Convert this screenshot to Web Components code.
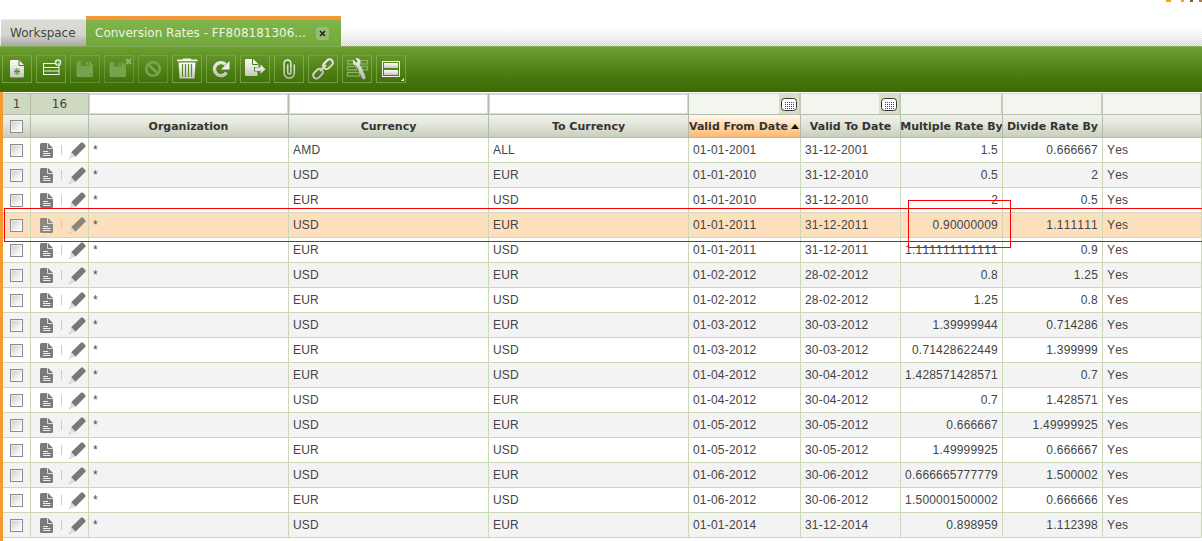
<!DOCTYPE html>
<html>
<head>
<meta charset="utf-8">
<title>Conversion Rates</title>
<style>
  html, body { margin: 0; padding: 0; background: #fff; overflow: hidden; }
  body { width: 1202px; height: 541px; position: relative; font-family: "DejaVu Sans", sans-serif; }
  svg { display: block; }
  .defs { position: absolute; width: 0; height: 0; }
</style>
</head>
<body>
<svg class="defs" aria-hidden="true"><defs>
  <linearGradient id="w" x1="0" y1="0" x2="0" y2="1"><stop offset="0" stop-color="#fff"/><stop offset="1" stop-color="#c4c8bc"/></linearGradient>
  <linearGradient id="wl" gradientUnits="userSpaceOnUse" x1="0" y1="3" x2="0" y2="23"><stop offset="0" stop-color="#f4f4f0"/><stop offset="1" stop-color="#b4baa8"/></linearGradient>
</defs></svg>
<app-shell>
  <tab-bar slot="tabs">
    <plain-tab>Workspace</plain-tab>
    <active-tab>Conversion Rates - FF808181306...</active-tab>
  </tab-bar>
  <tool-bar slot="toolbar">
    <tool-button title="New document">
      <svg width="28" height="26" viewBox="0 0 28 26"><path d="M8.500 4h7.500l5 5v11a1.500 1.500 0 0 1-1.500 1.500h-11a1.500 1.500 0 0 1-1.500-1.500v-15a1.500 1.500 0 0 1 1.500-1z" fill="url(#w)"/><path d="M16 3.500v6h5.500" fill="none" stroke="#4a7a18" stroke-width="1"/><path d="M14 12v7M11 15.500h6M11.500 13l5 5M16.500 13l-5 5" stroke="#4f9020" stroke-width="1"/></svg>
    </tool-button>
    <tool-button title="New row">
      <svg width="28" height="26" viewBox="0 0 28 26"><rect x="6.500" y="7.500" width="15.500" height="11" fill="none" stroke="#f2f5ea" stroke-width="1"/><path d="M6.500 11.500h15.500M6.500 15h15.500" stroke="#f2f5ea"/><circle cx="21" cy="6.500" r="3.200" fill="#f4f4f0"/><path d="M21 4v5M18.700 6.500h4.600M19.300 4.800l3.400 3.400M22.700 4.800l-3.400 3.400" stroke="#5d8d2b" stroke-width=".8"/></svg>
    </tool-button>
    <tool-button title="Save" disabled>
      <svg width="28" height="26" viewBox="0 0 28 26"><path d="M7 5h11.500l3.500 3.500v11a1.500 1.500 0 0 1-1.500 1.500h-13.500a1.500 1.500 0 0 1-1.500-1.500v-13a1.500 1.500 0 0 1 1.500-1.500z" fill="#76a34d"/><rect x="10" y="5" width="8" height="5" fill="#5a8c2d"/><rect x="15" y="6" width="2" height="3" fill="#76a34d"/><circle cx="19.500" cy="18.500" r=".7" fill="#4d8021"/></svg>
    </tool-button>
    <tool-button title="Save and close" disabled>
      <svg width="28" height="26" viewBox="0 0 28 26"><path d="M6 6h11.500l3.500 3.500v10a1.500 1.500 0 0 1-1.500 1.500h-13.500a1.500 1.500 0 0 1-1.500-1.500v-12a1.500 1.500 0 0 1 1.500-1.500z" fill="#76a34d"/><rect x="9" y="6" width="8" height="4.500" fill="#5a8c2d"/><rect x="14" y="7" width="2" height="2.500" fill="#76a34d"/><path d="M21 3l5 5M26 3l-5 5" stroke="#8fb56b" stroke-width="2"/></svg>
    </tool-button>
    <tool-button title="Cancel" disabled>
      <svg width="28" height="26" viewBox="0 0 28 26"><circle cx="14" cy="13" r="6.800" fill="none" stroke="#78a550" stroke-width="2.600"/><path d="M9.500 8.500l9 9" stroke="#78a550" stroke-width="2.600"/></svg>
    </tool-button>
    <tool-button title="Delete">
      <svg width="28" height="26" viewBox="0 0 28 26"><path d="M9.500 3.500l.6-1h7.800l.6 1h6v1.700h-20.500v-1.700z" fill="#f4f4f2"/><path d="M5.500 6.500h17l-1 16h-15z" fill="url(#w)"/><path d="M9.500 8v13M12.500 8v13M15.500 8v13M18.500 8v13" stroke="#5a8a2a" stroke-width="1.200"/></svg>
    </tool-button>
    <tool-button title="Refresh">
      <svg width="28" height="26" viewBox="0 0 28 26"><path d="M19.500 16.500a6.500 6.500 0 1 1-1-8" fill="none" stroke="url(#wl)" stroke-width="3.400"/><path d="M22.500 5v8.500h-8.500z" fill="#efefed"/></svg>
    </tool-button>
    <tool-button title="Export">
      <svg width="28" height="26" viewBox="0 0 28 26"><path d="M5 3h7l5.500 5v3h-4.500v4.500h3.500v4.500h-11.500a1 1 0 0 1-1-1v-15a1 1 0 0 1 1-1z" fill="url(#w)"/><path d="M11.500 3v5.500h5.500" fill="none" stroke="#4a7a18"/><path d="M14 11.500h5.500v-3l5 4.700-5 4.700v-3h-5.500z" fill="url(#w)"/></svg>
    </tool-button>
    <tool-button title="Attach">
      <svg width="28" height="26" viewBox="0 0 28 26"><path d="M19.300 8.500v8.500a5.100 5.100 0 0 1-10.200 0v-9.500a3.400 3.400 0 0 1 6.800 0v9a1.600 1.600 0 0 1-3.200 0v-8" fill="none" stroke="url(#wl)" stroke-width="1.500"/></svg>
    </tool-button>
    <tool-button title="Link">
      <svg width="28" height="26" viewBox="0 0 28 26"><g fill="none" stroke="url(#wl)" stroke-width="2"><rect x="13.500" y="5" width="11" height="6.500" rx="3.200" transform="rotate(-45 19 8.200)"/><rect x="3.500" y="14.500" width="11" height="6.500" rx="3.200" transform="rotate(-45 9 17.700)"/><path d="M11 15l6-6"/></g></svg>
    </tool-button>
    <tool-button title="Tools">
      <svg width="28" height="26" viewBox="0 0 28 26"><g fill="none" stroke="#8fb468" stroke-width="1.200"><rect x="4.500" y="4.500" width="6" height="3.500"/><rect x="17.500" y="4.500" width="7" height="3.500"/><rect x="4.500" y="10.500" width="9" height="3.500"/><rect x="19" y="10.500" width="5.500" height="3.500"/><rect x="4.500" y="16.500" width="12" height="3.500"/></g><path d="M10 3.500l3.300 3.300 1.400-1.400-2.300-3.400c2.500-.4 4.800 1 5 3.600 0 1-.2 1.700-.7 2.400l5.800 12.500c.5 1.200-.1 2.300-1 2.700-1 .4-2.100 0-2.600-1.100l-5.300-12.400c-2.400.1-4.200-1.800-3.600-6.200z" fill="url(#wl)"/></svg>
    </tool-button>
    <tool-button title="Toggle form">
      <svg width="28" height="26" viewBox="0 0 28 26"><rect x="5.500" y="5.500" width="17" height="15" fill="none" stroke="#f4f6ee"/><rect x="7" y="7" width="14" height="5" fill="url(#w)"/><rect x="7" y="14" width="14" height="5" fill="url(#w)"/><path d="M27 22v3h-3z" fill="#e8ecd8"/></svg>
    </tool-button>
  </tool-bar>
  <data-grid slot="grid"></data-grid>
</app-shell>

<script>
// column widths are shared by the filter row, the header and the body rows
const COLS = '28px 58px 200px 200px 200px 112px 100px 102px 100px 99px';

const DOC_ICON = `<svg width="13" height="15" viewBox="0 0 13 15"><path d="M1.500 0h6.500l5 5v8.500a1.500 1.500 0 0 1-1.500 1.500h-10a1.500 1.500 0 0 1-1.500-1.500v-12a1.500 1.500 0 0 1 1.500-1.500z" fill="#7a7a7a"/><path d="M7.500 0v5.500h5.500" fill="none" stroke="#e8e8e8" stroke-width=".9"/><path d="M3 8.500h5M3 10.500h7.500M3 12.500h7.500" stroke="#eee" stroke-width="1"/></svg>`;
const PEN_ICON = `<svg width="17" height="17" viewBox="0 0 17 17"><path d="M12 .8a1.500 1.500 0 0 1 2 0l2.200 2.200a1.500 1.500 0 0 1 0 2l-9.700 9.700-4.400-4.400z" fill="#777"/><path d="M2.100 10.300l4.400 4.400-4.800 1.600-.9-.9z" fill="#dcdcdc"/><path d="M.8 15.400l.9.900-1.500.6z" fill="#888"/></svg>`;

const ROWS = [
  ['AMD', 'ALL', '01-01-2001', '31-12-2001', '1.5', '0.666667'],
  ['USD', 'EUR', '01-01-2010', '31-12-2010', '0.5', '2'],
  ['EUR', 'USD', '01-01-2010', '31-12-2010', '2', '0.5'],
  ['USD', 'EUR', '01-01-2011', '31-12-2011', '0.90000009', '1.111111'],
  ['EUR', 'USD', '01-01-2011', '31-12-2011', '1.111111111111', '0.9'],
  ['USD', 'EUR', '01-02-2012', '28-02-2012', '0.8', '1.25'],
  ['EUR', 'USD', '01-02-2012', '28-02-2012', '1.25', '0.8'],
  ['USD', 'EUR', '01-03-2012', '30-03-2012', '1.39999944', '0.714286'],
  ['EUR', 'USD', '01-03-2012', '30-03-2012', '0.71428622449', '1.399999'],
  ['EUR', 'USD', '01-04-2012', '30-04-2012', '1.428571428571', '0.7'],
  ['USD', 'EUR', '01-04-2012', '30-04-2012', '0.7', '1.428571'],
  ['USD', 'EUR', '01-05-2012', '30-05-2012', '0.666667', '1.49999925'],
  ['EUR', 'USD', '01-05-2012', '30-05-2012', '1.49999925', '0.666667'],
  ['USD', 'EUR', '01-06-2012', '30-06-2012', '0.666665777779', '1.500002'],
  ['EUR', 'USD', '01-06-2012', '30-06-2012', '1.500001500002', '0.666666'],
  ['USD', 'EUR', '01-01-2014', '31-12-2014', '0.898959', '1.112398'],
];

class AppShell extends HTMLElement {
  constructor() {
    super();
    this.attachShadow({ mode: 'open' });
    this.shadowRoot.innerHTML = `
      <style>
        :host { display: block; width: 1202px; height: 541px; position: relative; overflow: hidden; }
        .corner { position: absolute; top: 0; height: 2px; }
        .red { position: absolute; border: 1px solid #f00; box-sizing: border-box; pointer-events: none; }
      </style>
      <slot name="tabs"></slot>
      <slot name="toolbar"></slot>
      <slot name="grid"></slot>
      <div class="corner" style="left:1166px;width:5px;background:#f9a11b"></div>
      <div class="corner" style="left:1181px;width:3px;background:#f9a11b"></div>
      <div class="corner" style="left:1190px;width:3px;background:#8a5a2b"></div>
      <div class="corner" style="left:1199px;width:3px;background:#a97a4b"></div>
      <div class="red" style="left:4px;top:208px;width:1199px;height:34px;border-right:0"></div>
      <div class="red" style="left:908px;top:200px;width:103px;height:48px"></div>
    `;
  }
}

class TabBar extends HTMLElement {
  constructor() {
    super();
    this.attachShadow({ mode: 'open' });
    this.shadowRoot.innerHTML = `
      <style>
        :host {
          display: flex; align-items: flex-end; height: 46px; box-sizing: border-box; padding-left: 1px;
          background:
            linear-gradient(to bottom, #fff 0, #fff 27px, rgba(255,255,255,.55) 37px, rgba(255,255,255,0) 46px),
            repeating-conic-gradient(#cfcfcf 0 25%, #f2f2f2 0 50%) 0 0 / 2px 2px;
        }
      </style>
      <slot></slot>
    `;
  }
}

class PlainTab extends HTMLElement {
  constructor() {
    super();
    this.attachShadow({ mode: 'open' });
    this.shadowRoot.innerHTML = `
      <style>
        :host {
          display: flex; align-items: center; box-sizing: border-box; width: 85px; height: 27px; padding: 0 0 1px 9px;
          font: 12px "DejaVu Sans", sans-serif; color: #444;
          background: linear-gradient(to bottom, #dcdcd6 0, #d6d6d0 55%, #a9a9a5 100%);
          border-top: 1px solid #ecece6;
        }
      </style>
      <slot></slot>
    `;
  }
}

class ActiveTab extends HTMLElement {
  constructor() {
    super();
    this.attachShadow({ mode: 'open' });
    this.shadowRoot.innerHTML = `
      <style>
        :host {
          display: flex; align-items: center; box-sizing: border-box; width: 255px; height: 30px; padding: 0 0 0 9px;
          font: 12px "DejaVu Sans", sans-serif; color: #eef4e2;
          border-top: 4px solid #f5983a;
          background: linear-gradient(to bottom, #7fb44b 0, #72a93c 100%);
        }
        .text { width: 221px; white-space: nowrap; overflow: hidden; }
        .close {
          display: flex; align-items: center; justify-content: center; width: 13px; height: 13px; border-radius: 3px;
          background: #98bb78; color: #222;
        }
      </style>
      <span class="text"><slot></slot></span>
      <span class="close"><svg width="7" height="7" viewBox="0 0 7 7" style="display:block"><path d="M1 1l5 5M6 1l-5 5" stroke="#1c2414" stroke-width="1.500"/></svg></span>
    `;
  }
}

class ToolBar extends HTMLElement {
  constructor() {
    super();
    this.attachShadow({ mode: 'open' });
    this.shadowRoot.innerHTML = `
      <style>
        :host {
          display: flex; gap: 4px; box-sizing: border-box; height: 46px; padding: 9px 0 0 2px;
          background: linear-gradient(to bottom, #6d9f30 0, #5f9026 25%, #4a7c12 60%, #3a6a02 100%);
          border-top: 1px solid #86ad58;
        }
      </style>
      <slot></slot>
    `;
  }
}

class ToolButton extends HTMLElement {
  constructor() {
    super();
    this.attachShadow({ mode: 'open' });
    this.shadowRoot.innerHTML = `
      <style>
        :host {
          display: flex; align-items: center; justify-content: center; box-sizing: border-box; width: 30px; height: 28px;
          margin-top: -1px;
          border: 1px solid rgba(150,195,100,.55); border-top-color: rgba(150,195,100,.3);
        }
        :host([disabled]) { border-color: rgba(150,195,100,.35); }
      </style>
      <slot></slot>
    `;
  }
}

class DataGrid extends HTMLElement {
  constructor() {
    super();
    this.attachShadow({ mode: 'open' });
  }

  connectedCallback() {
    this.render();
  }

  render() {
    this.shadowRoot.innerHTML = `
      <style>
        :host { display: block; box-sizing: border-box; height: 449px; border-left: 3px solid #f59a2e; padding-top: 1px; background: #fff; }
        .filter, .head { display: grid; grid-template-columns: ${COLS}; }
        .filter { height: 22px; background: #fff; }
        .filter > div { box-sizing: border-box; border-right: 1px solid #b4bcac; border-bottom: 1px solid #b4bcac; border-top: 1px solid #b4bcac; }
        .count { display: flex; align-items: center; justify-content: center; background: #cfd9bf; font: 12px "DejaVu Sans", sans-serif; color: #444; }
        .filter > .input { background: #fff; border-top-color: #d4d6de; box-shadow: inset 0 0 0 1px #d2d4de; }
        .filter > .soft { background: #f3f6ee; display: flex; justify-content: flex-end; border-right: 2px solid #c6cabd; border-top-color: #d4d8cc; }
        .cal { box-sizing: border-box; width: 20px; height: 20px; background: #d8dfc8; display: flex; align-items: center; justify-content: center; }
        .head { height: 23px; }
        .head > div {
          box-sizing: border-box; border-right: 1px solid #b4bcac; border-bottom: 1px solid #b4bcac;
          background: linear-gradient(to bottom, #f0f2ea 0, #e4e7db 40%, #c7cfbd 100%);
          display: flex; align-items: center; justify-content: center;
          font: bold 11px "DejaVu Sans", sans-serif; color: #333; white-space: nowrap; overflow: hidden;
        }
        .head > .sorted { background: linear-gradient(to bottom, #fffaf2 0, #ffdcb4 45%, #fdb872 100%); justify-content: flex-start; }
        .arrow { margin-left: 3px; width: 0; height: 0; border-left: 4px solid transparent; border-right: 4px solid transparent; border-bottom: 5px solid #111; }
      </style>
      <div class="filter">
        <div class="count">1</div>
        <div class="count">16</div>
        <div class="input"></div><div class="input"></div><div class="input"></div>
        <div class="soft"><span class="cal">${this.calendar()}</span></div>
        <div class="soft"><span class="cal">${this.calendar()}</span></div>
        <div class="soft"></div><div class="soft"></div><div class="soft"></div>
      </div>
      <div class="head">
        <div><grid-check></grid-check></div>
        <div></div>
        <div>Organization</div>
        <div>Currency</div>
        <div>To Currency</div>
        <div class="sorted">Valid From Date<span class="arrow"></span></div>
        <div>Valid To Date</div>
        <div>Multiple Rate By</div>
        <div>Divide Rate By</div>
        <div></div>
      </div>
      ${ROWS.map((r, i) => `<grid-row data-row="${i}"></grid-row>`).join('')}
    `;
  }

  calendar() {
    return `<svg width="16" height="13" viewBox="0 0 16 13" style="display:block"><rect x=".5" y=".5" width="15" height="12" rx="3" fill="#fff" stroke="#333"/><path d="M4 4.500h9M4 6.500h9M4 8.500h9M4 10.500h9" stroke="#444" stroke-dasharray="1 1"/></svg>`;
  }
}

class GridCheck extends HTMLElement {
  constructor() {
    super();
    this.attachShadow({ mode: 'open' });
    this.shadowRoot.innerHTML = `
      <style>
        :host {
          display: block; box-sizing: border-box; width: 13px; height: 13px; border: 1px solid #8c8c8c;
          outline: 1px solid rgba(255,255,255,.5); outline-offset: -2px;
          background: linear-gradient(135deg, #c9c9c9 0, #efefef 60%, #fff 100%);
        }
      </style>
    `;
  }
}

class GridRow extends HTMLElement {
  constructor() {
    super();
    this.attachShadow({ mode: 'open' });
  }

  connectedCallback() {
    const i = Number(this.dataset.row);
    const [cur, to, from, until, mult, div] = ROWS[i];
    const bg = i === 3 ? '#fcdfbd' : (i % 2 ? '#f3f3f3' : '#fff');
    this.shadowRoot.innerHTML = `
      <style>
        :host {
          display: grid; grid-template-columns: ${COLS}; height: 25px; box-sizing: border-box;
          background: ${bg}; font: 12px "Liberation Sans", Arial, sans-serif; letter-spacing: .2px; font-kerning: none; color: #444;
        }
        .c {
          box-sizing: border-box; border-right: 1px solid #ccd8b8; border-bottom: 1px solid #ccd8b8;
          padding: 0 4px; display: flex; align-items: center; white-space: nowrap; overflow: hidden; min-width: 0;
        }
        .r { justify-content: flex-end; }
        .r span { flex-shrink: 0; }
        .chk { padding: 0 0 0 7px; }
        .act { padding: 0 0 0 9px; }
        .act svg { display: block; }
        .sep { width: 1px; height: 10px; background: #ccc; margin: 0 7px 0 8px; flex-shrink: 0; }
        .ico { flex-shrink: 0; opacity: ${i === 3 ? '.85' : '1'}; }
        .star { color: #3a4a78; padding-left: 4px; align-items: flex-start; padding-top: 5px; }
      </style>
      <div class="c chk"><grid-check></grid-check></div>
      <div class="c act"><span class="ico">${DOC_ICON}</span><span class="sep"></span><span class="ico">${PEN_ICON}</span></div>
      <div class="c star">*</div>
      <div class="c">${cur}</div>
      <div class="c">${to}</div>
      <div class="c">${from}</div>
      <div class="c">${until}</div>
      <div class="c r"><span>${mult}</span></div>
      <div class="c r"><span>${div}</span></div>
      <div class="c">Yes</div>
    `;
  }
}

customElements.define('app-shell', AppShell);
customElements.define('tab-bar', TabBar);
customElements.define('plain-tab', PlainTab);
customElements.define('active-tab', ActiveTab);
customElements.define('tool-bar', ToolBar);
customElements.define('tool-button', ToolButton);
customElements.define('grid-check', GridCheck);
customElements.define('grid-row', GridRow);
customElements.define('data-grid', DataGrid);
</script>
</body>
</html>
